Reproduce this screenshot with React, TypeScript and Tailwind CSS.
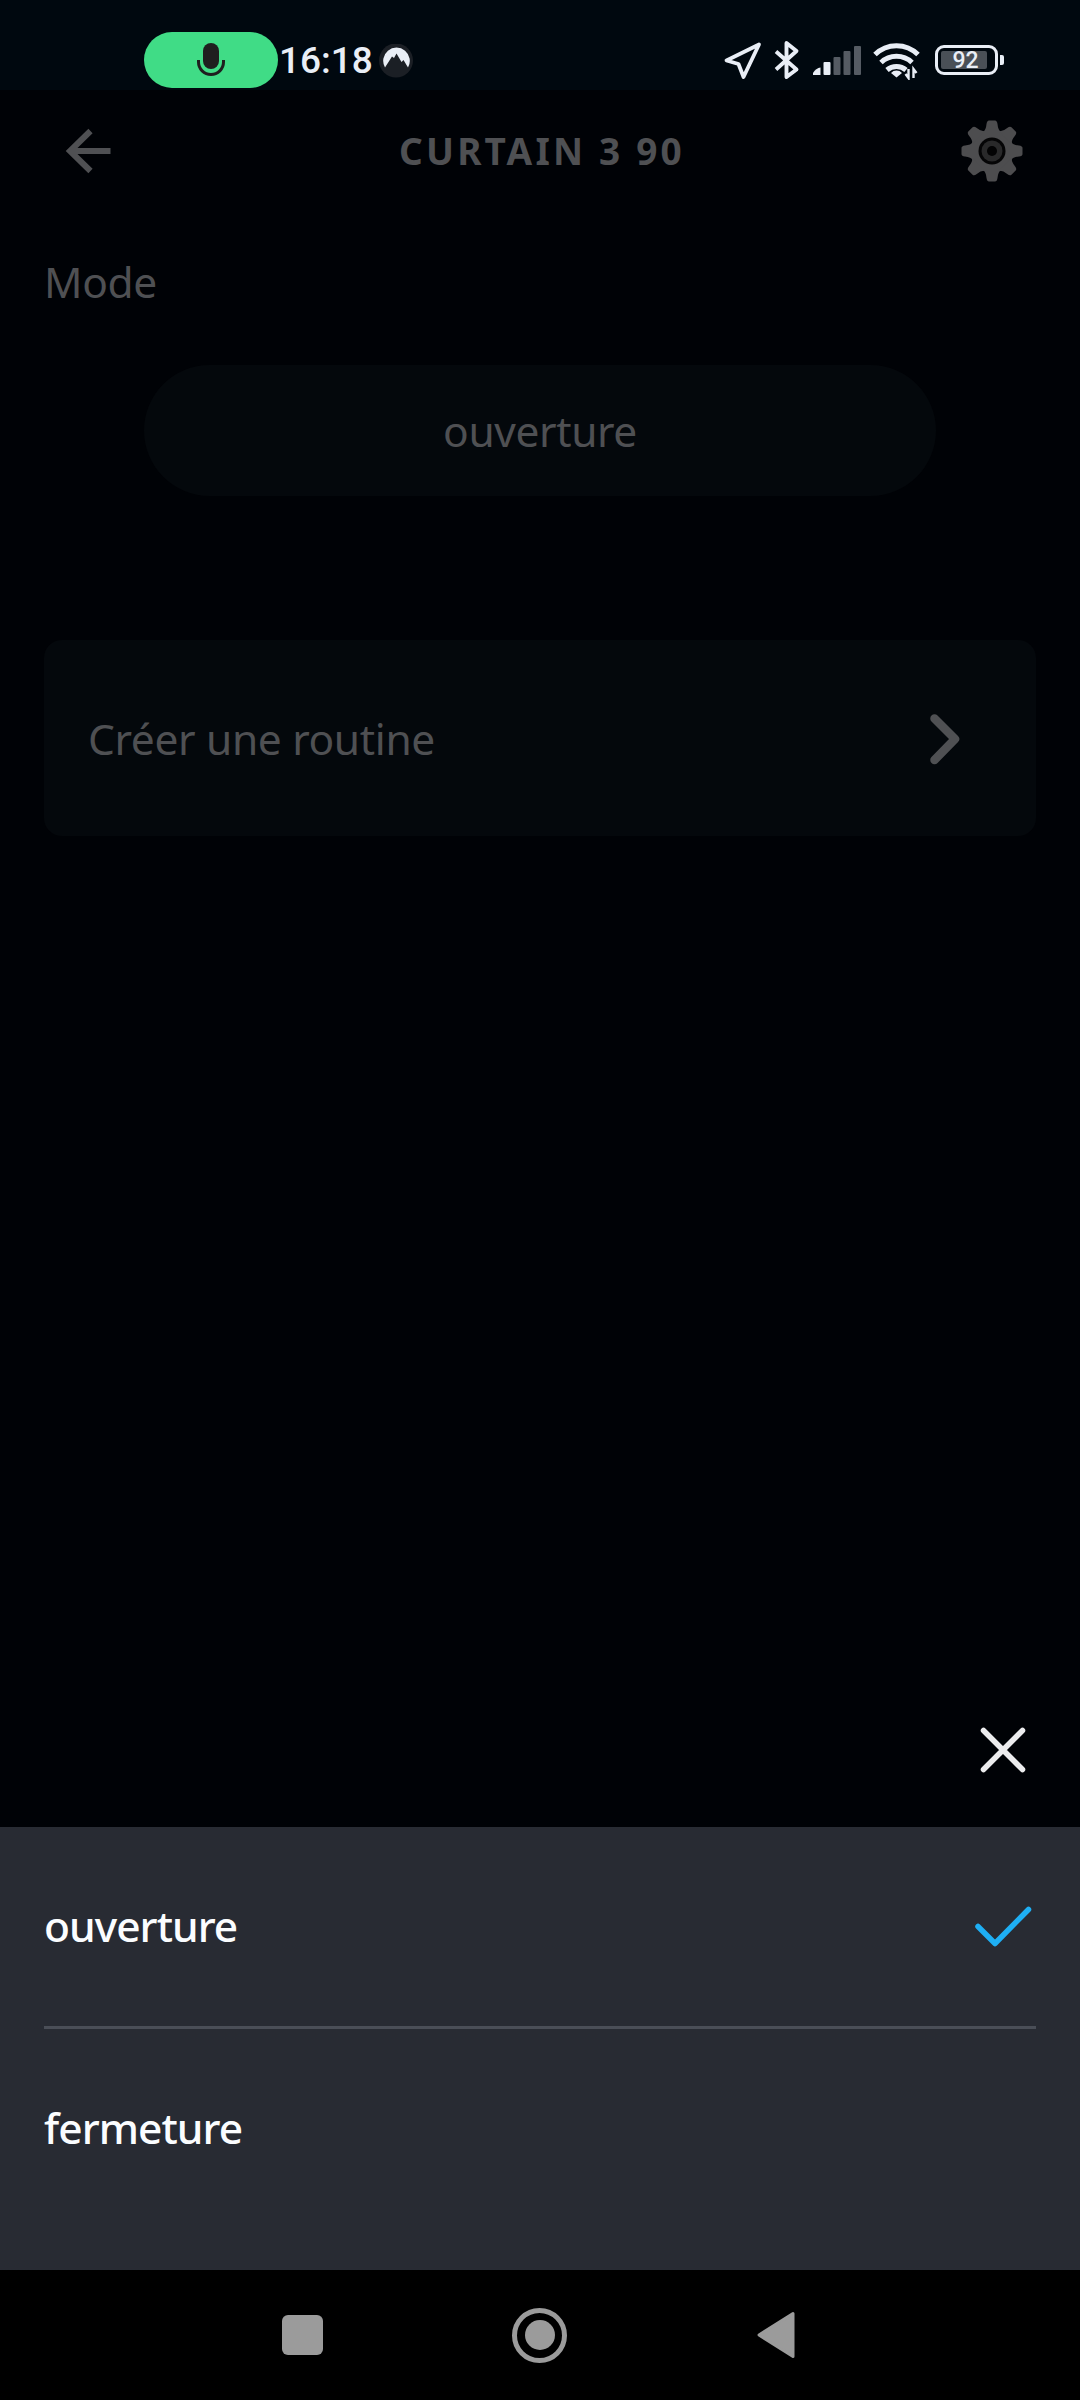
import { useState } from "react";

interface IOptionRowProps {
  label: string;
  selected: boolean;
  onSelect: () => void;
}

const modes = ["ouverture", "fermeture"];

function StatusBar() {
  return (
    <div className="flex h-[90px] items-start bg-[#00080f] pl-36 pr-[76px] pt-8 font-['Roboto',sans-serif] text-[#e9eef6]">
      <div className="flex h-14 w-[134px] items-center justify-center rounded-full bg-[#40dc86]">
        <svg width="30" height="36" viewBox="0 0 30 36" fill="none">
          <rect x="7" y="1" width="16" height="26" rx="8" fill="#1f1f1f" />
          <path
            d="M2.5 18v2a12.5 12.5 0 0 0 25 0v-2"
            stroke="#1f1f1f"
            strokeWidth="3"
          />
        </svg>
      </div>
      <span className="h-14 w-[101px] pl-px text-[37px] font-medium leading-[58px]">
        16:18
      </span>
      <svg className="mt-3" width="34" height="34" viewBox="0 0 34 34">
        <circle cx="17" cy="16.5" r="17" fill="#1b1f25" />
        <path
          d="M6 23.500A13.3 13.3 0 1 1 29 23.500L24.500 16 22.500 18 17.500 9.500 15 14 13 12.500Z"
          fill="#e9eef6"
        />
      </svg>

      <div className="ml-auto flex">
        <svg className="mt-2" width="40" height="40" viewBox="0 0 40 40" fill="none">
          <path
            d="M36 4.5 3.500 20.5 15.500 24 20.500 37Z"
            stroke="currentColor"
            strokeWidth="3.8"
            strokeLinejoin="round"
          />
        </svg>
        <svg
          className="ml-[9px] mt-2"
          width="30"
          height="40"
          viewBox="0 0 30 40"
          fill="none"
        >
          <path
            d="M4 11.5 24.5 29.5 14.5 37V3L24.5 11 4 29.5"
            stroke="currentColor"
            strokeWidth="3.9"
            strokeLinejoin="round"
          />
        </svg>
        <svg
          className="ml-[11px] mt-3"
          width="48"
          height="32"
          viewBox="0 0 48 32"
          fill="#555b63"
        >
          <path d="M0 31V29Q3 24 7.500 23.500V31Z" fill="#e9eef6" />
          <rect x="10.500" y="18" width="7" height="13" rx="1" fill="#e9eef6" />
          <rect x="20.500" y="13" width="7" height="18" rx="1" />
          <rect x="30.500" y="7" width="7" height="24" rx="1" />
          <rect x="41" y="2" width="7" height="29" rx="1" />
        </svg>
        <svg
          className="ml-[12px] mt-2"
          width="48"
          height="40"
          viewBox="0 0 48 40"
          fill="none"
          stroke="currentColor"
          strokeWidth="5"
        >
          <path d="M2 14.500a30.500 30.500 0 0 1 43 0" />
          <path d="M8 22.500a22.500 22.500 0 0 1 31 0" />
          <path d="M14 30a14.500 14.500 0 0 1 19 0" />
          <path
            d="M23.500 37.500 18 33a7.500 7.500 0 0 1 11 0Z"
            fill="currentColor"
            stroke="none"
          />
          <path
            d="M35.500 29v9l-3-4M40.500 38v-9l3 4"
            strokeWidth="2.400"
          />
        </svg>
        <div className="ml-[14px] mt-[13px] flex h-[30px] items-center">
          <div className="flex h-[30px] w-[63px] items-center rounded-[9px] border-[3px] border-[#e9eef6] pl-[3px]">
            <div className="flex h-[18px] w-[46px] items-center justify-center rounded-[2px] bg-[#4a5057] pl-[3px] pt-[2px] text-[23px] font-medium leading-[18px]">
              92
            </div>
          </div>
          <div className="ml-[2px] h-[10px] w-1 rounded-r-[2px] bg-[#e9eef6]" />
        </div>
      </div>
    </div>
  );
}

function GearIcon() {
  return (
    <svg width="62" height="62" viewBox="-31 -31 62 62" fill="#4d4d4f">
      <circle r="21.500" />
      {[0, 45, 90, 135, 180, 225, 270, 315].map((angle) => (
        <path
          key={angle}
          d="M-9-19Q-6-21-5.500-27Q-5-30.500-3-30.500H3Q5-30.500 5.500-27Q6-21 9-19Z"
          transform={`rotate(${angle})`}
        />
      ))}
      <circle r="13.500" fill="#050506" />
      <circle r="10.500" fill="#29292a" />
      <circle r="5" fill="#030304" />
    </svg>
  );
}

function OptionRow({ label, selected, onSelect }: IOptionRowProps) {
  return (
    <button
      className="flex h-[199px] w-full items-center justify-between pb-[2px] pr-1 text-left"
      onClick={onSelect}
    >
      <span className="text-[42.5px] font-medium leading-[60px] tracking-[-0.95px]">
        {label}
      </span>
      {selected && (
        <svg width="60" height="44" viewBox="0 0 60 44" fill="none">
          <path
            d="M6 22.500 23 39.500 56.500 5.500"
            stroke="#1eaff4"
            strokeWidth="5.500"
            strokeLinecap="round"
            strokeLinejoin="round"
          />
        </svg>
      )}
    </button>
  );
}

function App() {
  const [mode, setMode] = useState("ouverture");

  return (
    <div className="flex h-[2400px] w-[1080px] flex-col overflow-hidden bg-[#000206] font-['Noto_Sans',sans-serif]">
      <StatusBar />

      <main className="flex flex-1 flex-col text-[#4f5053]">
        <header className="flex h-[122px] items-center justify-between pl-[65px] pr-[57px]">
          <svg width="48" height="48" viewBox="0 0 48 48" fill="none">
            <path
              d="M45.500 24H5M25.500 4 5 24 25.500 44"
              stroke="currentColor"
              strokeWidth="6"
            />
          </svg>
          <h1 className="pb-px pl-[10px] text-[37px] font-bold leading-[50px] tracking-[3.2px]">
            CURTAIN 3 90
          </h1>
          <GearIcon />
        </header>

        <h2 className="ml-11 mt-10 text-[42.5px] leading-[60px] tracking-[-0.4px]">
          Mode
        </h2>
        <button className="mx-36 mt-[53px] h-[131px] rounded-full bg-[#04080c] pt-px text-[42.5px] leading-[60px] tracking-[-0.4px]">
          {mode}
        </button>

        <button className="mx-11 mt-36 flex h-[196px] items-center justify-between rounded-[18px] bg-[#04080c] pl-11 pr-[71px] pt-[2px]">
          <span className="text-[42.5px] leading-[60px] tracking-[-0.35px]">
            Créer une routine
          </span>
          <svg width="40" height="56" viewBox="0 0 40 56" fill="none">
            <path
              d="M9.500 7.500 30 28 9.500 49"
              stroke="currentColor"
              strokeWidth="8.500"
              strokeLinecap="round"
              strokeLinejoin="round"
            />
          </svg>
        </button>

        <button className="mb-[51px] ml-auto mr-[51px] mt-auto" aria-label="Fermer">
          <svg width="52" height="52" viewBox="0 0 52 52" fill="none">
            <path
              d="M6.500 6.500 45.500 45.500M45.500 6.500 6.500 45.500"
              stroke="#ececee"
              strokeWidth="5.500"
              strokeLinecap="round"
            />
          </svg>
        </button>
      </main>

      <section className="h-[443px] bg-[#282b33] px-11 text-[#fbfdff]">
        {modes.map((value, i) => (
          <div key={value}>
            {i > 0 && <div className="h-[3px] bg-[#4a4e57]" />}
            <OptionRow
              label={value}
              selected={mode === value}
              onSelect={() => setMode(value)}
            />
          </div>
        ))}
      </section>

      <nav className="flex h-[130px] items-center bg-black pl-[282px]">
        <div className="h-10 w-[41px] rounded-md bg-[#9b9b9b]" />
        <div className="ml-[189px] flex size-[55px] items-center justify-center rounded-full border-[5px] border-[#9b9b9b]">
          <div className="size-[30px] rounded-full bg-[#9b9b9b]" />
        </div>
        <svg className="ml-[189px]" width="42" height="50" viewBox="0 0 42 50">
          <path
            d="M3 25 37 3.500V46.500Z"
            fill="#9b9b9b"
            stroke="#9b9b9b"
            strokeWidth="3"
            strokeLinejoin="round"
          />
        </svg>
      </nav>
    </div>
  );
}

export default App;
